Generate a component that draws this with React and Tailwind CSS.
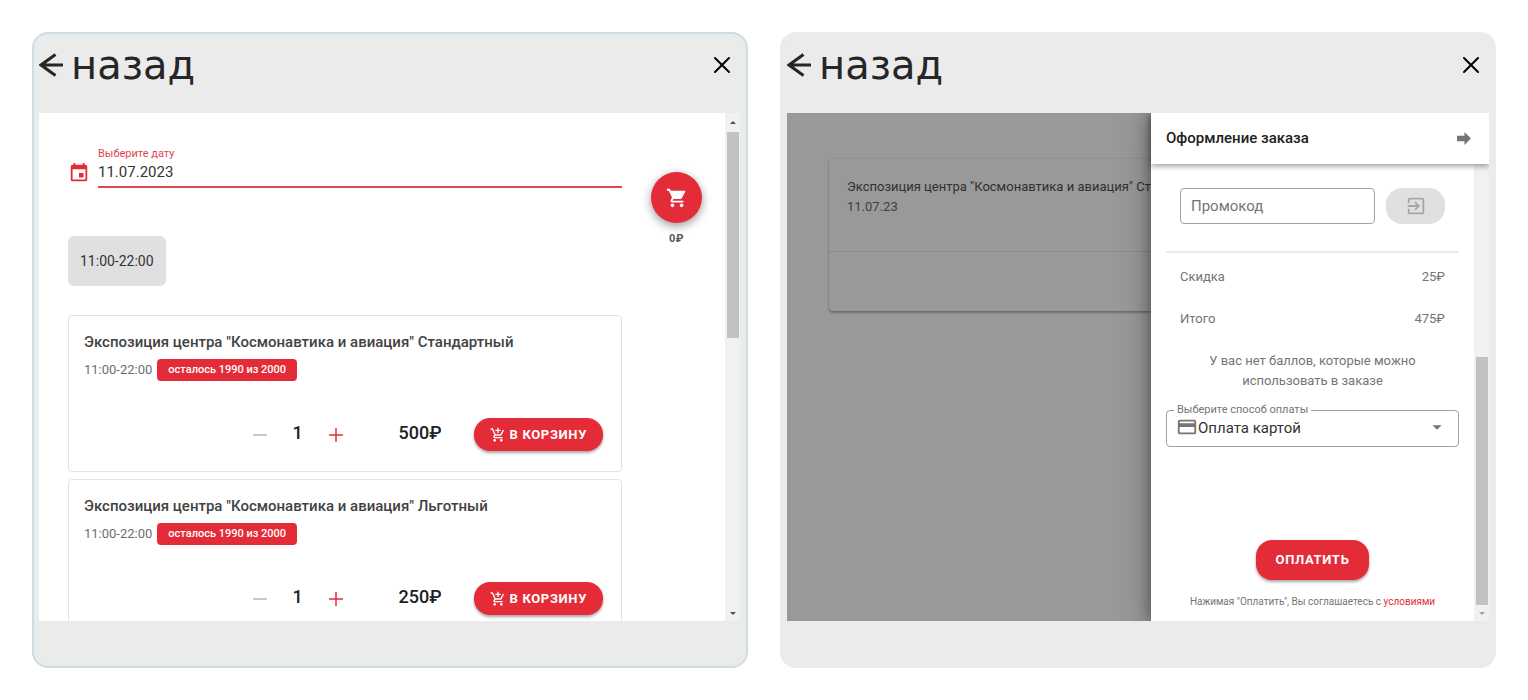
import { useState } from "react";
import { MdShoppingCart, MdAddShoppingCart, MdExitToApp, MdCreditCard, MdArrowDropDown } from "react-icons/md";

const tickets = [
  { id: "standard", title: 'Экспозиция центра "Космонавтика и авиация" Стандартный', price: 500 },
  { id: "reduced", title: 'Экспозиция центра "Космонавтика и авиация" Льготный', price: 250 },
];

const ctaClass = "bg-[#e42c38] text-[13px] font-bold tracking-wider text-white uppercase shadow-[0_2px_3px_rgba(0,0,0,0.35)]";

function CalendarIcon() {
  return (
    <svg viewBox="0 0 24 24" className="mt-3 size-[22px] shrink-0 text-[#e42c38]" fill="currentColor" aria-hidden="true">
      <path d="M19 19H5V8h14m-3-7v2H8V1H6v2H5c-1.110 0-2 .890-2 2v14a2 2 0 0 0 2 2h14a2 2 0 0 0 2-2V5a2 2 0 0 0-2-2h-1V1m-1 11h-5v5h5v-5z" />
    </svg>
  );
}

function Scrollbar({ thumb, upArrow, downClass }) {
  return (
    <div className="flex w-[15px] shrink-0 flex-col items-center bg-[#f1f1f1]" aria-hidden="true">
      {upArrow && (
        <div className="flex h-[19px] items-center">
          <div className="border-x-[3px] border-b-[3px] border-x-transparent border-b-[#505050]" />
        </div>
      )}
      <div className={`w-3 bg-[#c1c1c1] ${thumb}`} />
      <div className={`flex h-4 items-center ${downClass}`}>
        <div className="border-x-[3px] border-t-[3px] border-x-transparent border-t-current" />
      </div>
    </div>
  );
}

function Panel({ className, children }) {
  return (
    <section className={`flex min-w-0 flex-col overflow-hidden rounded-2xl border-2 bg-[#ebebeb] pb-[45px] pl-[5px] ${className}`}>
      <header className="flex h-[79px] shrink-0 items-start justify-between pt-[7px] pr-[9px]">
        <button type="button" className="flex items-center gap-2 text-[#262626]">
          <svg viewBox="0 0 24 24" className="size-6" fill="none" stroke="currentColor" strokeWidth="3" aria-hidden="true">
            <path d="M16.500 1.500 2 12l14.500 10.500M1.500 12H24" />
          </svg>
          <span className="font-['DejaVu_Sans',sans-serif] text-[40px] leading-[48px]">назад</span>
        </button>
        <button type="button" aria-label="Закрыть" className="flex h-12 items-center text-black">
          <svg viewBox="0 0 18 18" className="size-[18px]" fill="none" stroke="currentColor" strokeWidth="2" strokeLinecap="round" aria-hidden="true">
            <path d="m2 2 14 14M16 2 2 16" />
          </svg>
        </button>
      </header>
      {children}
    </section>
  );
}

function TicketCard({ ticket }) {
  const [count, setCount] = useState(1);

  return (
    <article className="rounded border border-[#e2e2e2] px-[15px] pt-[15px] pb-[19px]">
      <h2 className="text-[15px] leading-[22px] font-medium text-[#424242]">{ticket.title}</h2>
      <div className="mt-[6px] flex items-center gap-[5px]">
        <span className="text-[13px] text-[#6e6e6e]">11:00-22:00</span>
        <span className="rounded bg-[#e42c38] px-[11px] text-[11px] leading-[22px] font-medium text-white">осталось 1990 из 2000</span>
      </div>
      <div className="mt-[37px] flex items-start justify-end pr-[3px] text-lg leading-[30px] font-medium text-[#212121]">
        <button
          type="button"
          aria-label="Меньше"
          className="flex h-[34px] w-5 items-center justify-center text-[#b5b5b5]"
          onClick={() => setCount(Math.max(1, count - 1))}
        >
          <svg viewBox="0 0 14 14" className="size-[14px]" stroke="currentColor" strokeWidth="1.500" aria-hidden="true">
            <path d="M0 7h14" />
          </svg>
        </button>
        <output className="w-14 text-center">{count}</output>
        <button
          type="button"
          aria-label="Больше"
          className="flex h-[34px] w-5 items-center justify-center text-[#e42c38]"
          onClick={() => setCount(count + 1)}
        >
          <svg viewBox="0 0 14 14" className="size-[14px]" stroke="currentColor" strokeWidth="1.500" aria-hidden="true">
            <path d="M0 7h14M7 0v14" />
          </svg>
        </button>
        <span className="w-24 text-right">{ticket.price}₽</span>
        <button type="button" className={`ml-8 flex h-[33px] items-center gap-1 rounded-2xl px-4 ${ctaClass}`}>
          <MdAddShoppingCart className="size-4" />
          В корзину
        </button>
      </div>
    </article>
  );
}

function TicketsPanel() {
  return (
    <Panel className="border-[#cddde5] pr-[6px]">
      <div className="flex min-h-0 flex-1 bg-white">
        <div className="flex min-w-0 flex-1 items-start gap-[29px] overflow-hidden pr-[23px] pl-[29px]">
          <div className="min-w-0 flex-1 pt-[33px]">
            <div className="flex items-center gap-2">
              <CalendarIcon />
              <div className="flex-1 border-b-2 border-[#e04552] pb-1">
                <label htmlFor="date" className="block text-[11px] leading-4 text-[#e04552]">Выберите дату</label>
                <input id="date" defaultValue="11.07.2023" className="block h-5 w-full text-[15px] text-[#333] outline-none" />
              </div>
            </div>
            <button type="button" className="mt-12 h-[50px] rounded-md bg-[#e0e0e0] px-3 text-sm text-[#333]">
              11:00-22:00
            </button>
            <div className="mt-[29px] flex flex-col gap-[7px]">
              {tickets.map((ticket) => (
                <TicketCard key={ticket.id} ticket={ticket} />
              ))}
            </div>
          </div>
          <div className="flex w-[51px] flex-col items-center pt-[59px]">
            <button
              type="button"
              aria-label="Корзина"
              className="flex size-[51px] items-center justify-center rounded-full bg-[#e42c38] text-white shadow-[0_3px_10px_rgba(0,0,0,0.4)]"
            >
              <MdShoppingCart className="size-[22px]" />
            </button>
            <span className="mt-2 text-[11px] leading-4 font-bold tracking-wider text-[#555]">0₽</span>
          </div>
        </div>
        <Scrollbar upArrow thumb="h-[206px] mb-auto" downClass="text-[#505050]" />
      </div>
    </Panel>
  );
}

function CheckoutDrawer() {
  return (
    <aside className="absolute inset-y-0 right-0 flex w-[338px] flex-col bg-white shadow-[0_6px_30px_5px_rgba(0,0,0,0.2),0_0_14px_rgba(0,0,0,0.4)]">
      <div className="z-10 flex h-[51px] shrink-0 items-center justify-between bg-white pr-[18px] pl-[15px] shadow-[0_2px_6px_rgba(0,0,0,0.4)]">
        <h2 className="text-[15px] font-medium text-[#212121]">Оформление заказа</h2>
        <button type="button" aria-label="Свернуть" className="text-[#757575]">
          <svg viewBox="0 0 15 14" className="h-[13px] w-[14px]" fill="currentColor" aria-hidden="true">
            <path d="M0 4h8V0l7 7-7 7v-4H0z" />
          </svg>
        </button>
      </div>
      <div className="flex min-h-0 flex-1">
        <form className="flex min-w-0 flex-1 flex-col items-stretch px-[15px] pt-6 text-[13px] text-[#757575]" onSubmit={(e) => e.preventDefault()}>
          <div className="flex gap-[11px] px-[14px]">
            <input
              aria-label="Промокод"
              placeholder="Промокод"
              className="h-9 min-w-0 flex-1 rounded border border-[#a0a0a0] px-[10px] text-[15px] placeholder:text-[#757575]"
            />
            <button type="button" aria-label="Применить промокод" className="flex h-9 w-[59px] items-center justify-center rounded-2xl bg-[#e0e0e0] text-[#a6a6a6]">
              <MdExitToApp className="size-[22px]" />
            </button>
          </div>
          <hr className="mt-[27px] border-t-2 border-[#ebebeb]" />
          <dl className="px-[14px] pt-[14px]">
            <div className="flex justify-between leading-5">
              <dt>Скидка</dt>
              <dd>25₽</dd>
            </div>
            <div className="mt-[22px] flex justify-between leading-5">
              <dt>Итого</dt>
              <dd>475₽</dd>
            </div>
          </dl>
          <p className="mt-[22px] px-8 text-center leading-5">У вас нет баллов, которые можно использовать в заказе</p>
          <fieldset className="mt-[13px] h-[43px] rounded border border-[#a0a0a0] px-[7px]">
            <legend className="px-[3px] text-[11px] leading-3">
              <label htmlFor="payment">Выберите способ оплаты</label>
            </legend>
            <div className="flex items-center">
              <MdCreditCard className="ml-[2px] size-[22px] shrink-0" />
              <select id="payment" className="h-5 min-w-0 flex-1 appearance-none text-[15px] text-[#333] outline-none">
                <option>Оплата картой</option>
              </select>
              <MdArrowDropDown className="mr-[3px] size-[22px] shrink-0" />
            </div>
          </fieldset>
          <button type="submit" className={`mt-[93px] h-10 self-center rounded-2xl px-5 ${ctaClass}`}>
            Оплатить
          </button>
          <p className="mt-3 text-center text-[10px] leading-5">
            Нажимая "Оплатить", Вы соглашаетесь с <a href="#terms" className="text-[#e42c38]">условиями</a>
          </p>
        </form>
        <Scrollbar thumb="mt-auto h-[248px]" downClass="text-[#a3a3a3]" />
      </div>
    </aside>
  );
}

function CheckoutPanel() {
  return (
    <Panel className="border-[#ebebeb] pr-[5px]">
      <div className="relative min-h-0 flex-1 overflow-hidden bg-[#999] pt-[46px] pl-[42px]">
        <article className="rounded text-[13px] leading-5 text-[#404040] shadow-[0_2px_2px_rgba(0,0,0,0.25),0_0_2px_rgba(0,0,0,0.2)]">
          <div className="h-[93px] border-b border-[#8a8a8a] px-[18px] pt-[18px]">
            <h2 className="whitespace-nowrap text-[#303030]">Экспозиция центра "Космонавтика и авиация" Стандартный</h2>
            <p>11.07.23</p>
          </div>
          <div className="h-[59px]" />
        </article>
        <CheckoutDrawer />
      </div>
    </Panel>
  );
}

export default function App() {
  return (
    <main className="grid h-screen grid-cols-2 gap-8 bg-white p-8 font-['Roboto',sans-serif]">
      <TicketsPanel />
      <CheckoutPanel />
    </main>
  );
}
